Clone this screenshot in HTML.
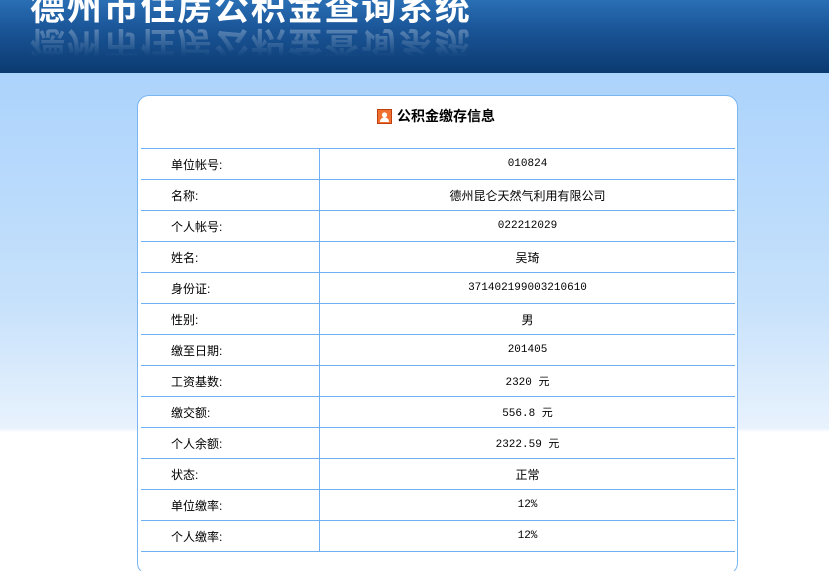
<!DOCTYPE html>
<html style="overflow:hidden;height:571px"><head><meta charset="utf-8"><style>
body{margin:0;width:829px;height:571px;overflow:hidden;background:linear-gradient(#acd3fc 72px,#c6e1fb 300px,#e8f2fd 428px,#fff 432px) no-repeat;background-size:829px 571px;font-family:"Liberation Sans","Noto Sans CJK SC",sans-serif;position:relative}
.hd{position:absolute;left:0;top:0;width:829px;height:73px;background:linear-gradient(#2a6fb5,#1a5597 40%,#0b3a70);overflow:hidden}
.t{position:absolute;left:30px;top:-20px;font-size:35px;font-weight:bold;color:#fff;letter-spacing:1.8px;white-space:nowrap;font-family:"Noto Sans CJK SC",sans-serif}
.r{position:absolute;left:30px;top:21px;font-size:35px;font-weight:bold;color:#fff;letter-spacing:1.8px;white-space:nowrap;transform:scaleY(-1);font-family:"Noto Sans CJK SC",sans-serif;-webkit-mask-image:linear-gradient(to top,rgba(0,0,0,.45),rgba(0,0,0,0) 70%);opacity:.8}
.box{position:absolute;left:137px;top:95px;width:599px;height:478px;background:#fff;border:1px solid #7ab6f2;border-radius:12px}
.ti{position:absolute;left:377px;top:106px;font-size:14px;font-weight:bold;color:#000;font-family:"Noto Sans CJK SC",sans-serif;display:flex;align-items:center}
.ic{width:15px;height:15px;background:#f07030;border:1px solid #c04010;margin-right:5px;box-sizing:border-box;position:relative}
table{position:absolute;left:141px;top:148px;width:594px;border-collapse:collapse;font-size:12px}
td{height:30px;border-top:1px solid #6fb0f5;border-bottom:1px solid #6fb0f5;padding:0;color:#000}
td:first-child{width:148px;padding-left:30px;border-right:1px solid #6fb0f5}
td:last-child{text-align:center;font-family:"Liberation Mono","Noto Sans CJK SC",monospace;font-size:11px}
</style></head><body>
<div class="hd"><div class="t">德州市住房公积金查询系统</div><div class="r">德州市住房公积金查询系统</div></div>
<div class="box"></div>
<div class="ti"><span class="ic"><svg width="13" height="13" viewBox="0 0 13 13" style="position:absolute;left:0;top:0"><circle cx="6.5" cy="5" r="2.6" fill="#fff"/><path d="M2 12c0-3 2-4.5 4.5-4.5S11 9 11 12z" fill="#fff"/></svg></span>公积金缴存信息</div>
<table>
<tr><td>单位帐号:</td><td>010824</td></tr>
<tr><td>名称:</td><td style="font-family:'Noto Sans CJK SC',sans-serif;font-size:12px">德州昆仑天然气利用有限公司</td></tr>
<tr><td>个人帐号:</td><td>022212029</td></tr>
<tr><td>姓名:</td><td style="font-family:'Noto Sans CJK SC',sans-serif;font-size:12px">吴琦</td></tr>
<tr><td>身份证:</td><td>371402199003210610</td></tr>
<tr><td>性别:</td><td style="font-family:'Noto Sans CJK SC',sans-serif;font-size:12px">男</td></tr>
<tr><td>缴至日期:</td><td>201405</td></tr>
<tr><td>工资基数:</td><td>2320 元</td></tr>
<tr><td>缴交额:</td><td>556.8 元</td></tr>
<tr><td>个人余额:</td><td>2322.59 元</td></tr>
<tr><td>状态:</td><td style="font-family:'Noto Sans CJK SC',sans-serif;font-size:12px">正常</td></tr>
<tr><td>单位缴率:</td><td>12%</td></tr>
<tr><td>个人缴率:</td><td>12%</td></tr>
</table>
</body></html>
